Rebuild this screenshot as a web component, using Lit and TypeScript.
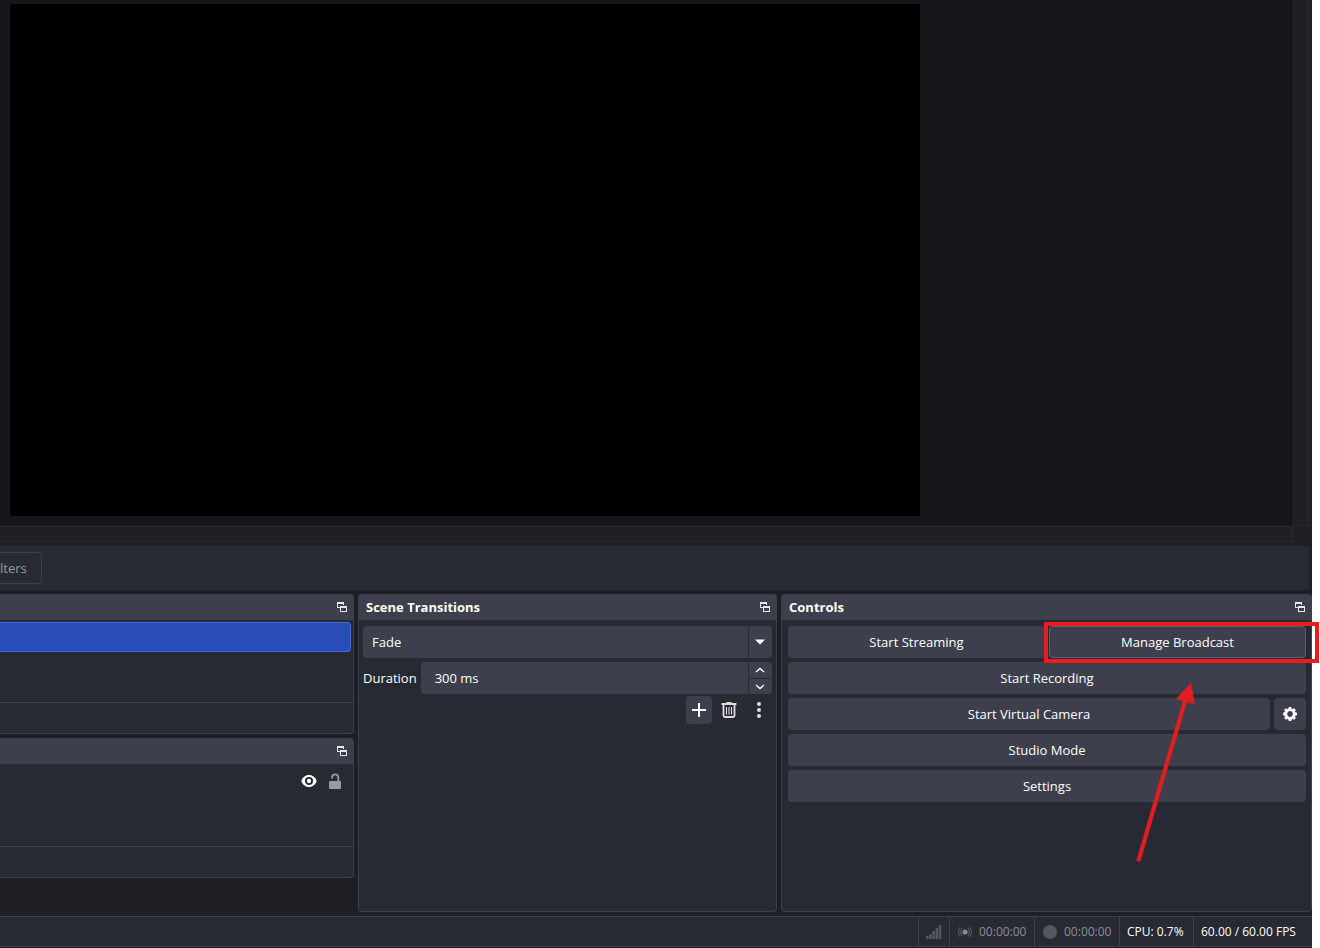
import { LitElement, html, css, svg } from "lit";
import { customElement, property, state } from "lit/decorators.js";

const shared = css`
  *, *::before, *::after { box-sizing: border-box; }
  button, input, select {
    font: inherit;
    color: inherit;
    margin: 0;
    padding: 0;
    border: 0;
    background: none;
  }
  svg { display: block; }
`;

@customElement("dock-panel")
class DockPanel extends LitElement {
  @property() heading = "";
  static styles = [shared, css`
    :host { display: flex; flex-direction: column; min-width: 0; }
    .head {
      display: flex;
      align-items: center;
      justify-content: space-between;
      height: 26px;
      padding: 0 7px 0 8px;
      background: #3d404c;
      border-radius: 4px 4px 0 0;
    }
    .title { margin: 0; font-size: 13px; line-height: 18px; font-weight: 700; color: #fff; }
    .float { color: #e4e6ea; }
    .body {
      flex: 1;
      display: flex;
      flex-direction: column;
      background: #272a33;
      border: 1px solid #3d404c;
      border-top: 0;
      border-radius: 0 0 4px 4px;
    }
    :host([flush]) .head { border-top-left-radius: 0; }
    :host([flush]) .body { border-left: 0; border-bottom-left-radius: 0; }
  `];
  render() {
    return html`
      <div class="head">
        <h2 class="title">${this.heading}</h2>
        <button class="float" aria-label="Float panel">
          <svg width="10" height="10" viewBox="0 0 10 10" fill="currentColor">
            <path d="M0 0H7V3H6V2H1V5H3V6H0Z" />
            <path d="M3 4H10V10H3ZM4 6V9H9V6Z" fill-rule="evenodd" />
          </svg>
        </button>
      </div>
      <div class="body"><slot></slot></div>
    `;
  }
}

const gearTeeth = [0, 45, 90, 135, 180, 225, 270, 315];

@customElement("app-root")
class AppRoot extends LitElement {
  @state() transition = "Fade";

  static styles = [shared, css`
    :host {
      display: block;
      overflow: hidden;
      background: #fff;
      font-family: "Open Sans", "Noto Sans", sans-serif;
      font-size: 13px;
      line-height: 18px;
      color: #fff;
    }
    .window {
      display: flex;
      flex-direction: column;
      min-height: 100vh;
      margin-right: 8px;
      background: #1e1f25;
      border-bottom: 1px solid #1c141c;
    }
    .stage {
      flex: 1;
      display: grid;
      grid-template-columns: 1fr 16px;
      grid-template-rows: 1fr 16px;
      padding-right: 3px;
    }
    .view { display: flex; background: #16171b; padding: 4px 10px 10px; }
    .canvas { width: 71.5%; background: #000; }
    .bar-v { border: 1px solid #292a2f; border-top: 0; background: #1f2024; }
    .bar-h { border: 1px solid #292a2f; border-left: 0; background: #1f2024; }
    .toolbar {
      display: flex;
      align-items: center;
      height: 44px;
      margin: 4px 3px 4px 0;
      background: #272a33;
      border-radius: 0 4px 4px 0;
      overflow: hidden;
    }
    .filters {
      height: 32px;
      margin-left: -25px;
      padding: 0 14px;
      border: 1px solid #3d404c;
      border-radius: 4px;
      color: #97999e;
    }
    .docks {
      display: grid;
      grid-template-columns: 354fr 419fr 531fr;
      gap: 4px;
      height: 318px;
    }
    .stack { display: flex; flex-direction: column; gap: 4px; }
    .stack dock-panel { height: 140px; }
    .list { flex: 1; padding: 2px 2px 0 0; }
    .scene {
      display: block;
      width: 100%;
      height: 30px;
      background: #284cb8;
      border: 1px solid #476bd7;
      border-left: 0;
      border-radius: 0 4px 4px 0;
    }
    .source { display: flex; justify-content: flex-end; align-items: center; gap: 12px; height: 30px; padding-right: 10px; }
    .lock { color: #9b9b9b; }
    .foot { height: 31px; border-top: 1px solid #3d404c; }
    .transitions { display: flex; flex-direction: column; gap: 4px; padding: 6px 4px; }
    .combo { display: grid; grid-template-columns: 1fr 24px; height: 32px; background: #3d404c; border-radius: 4px; overflow: hidden; }
    .combo > * { grid-row: 1; }
    .select {
      grid-column: 1 / 3;
      appearance: none;
      padding: 0 33px 0 9px;
      border-radius: 4px;
    }
    .caret {
      grid-column: 2;
      display: grid;
      place-items: center;
      border-left: 1px solid #272a33;
      pointer-events: none;
    }
    .row { display: flex; align-items: center; gap: 4px; }
    .spin { flex: 1; display: flex; height: 32px; background: #3d404c; border-radius: 4px; overflow: hidden; }
    .value { flex: 1; min-width: 0; padding: 0 14px; }
    .steps { display: grid; grid-template-rows: 1fr 1fr; width: 24px; border-left: 1px solid #272a33; }
    .step { display: grid; place-items: center; }
    .caret, .step { padding-right: 1px; }
    .step + .step { border-top: 1px solid #272a33; }
    .tools { display: flex; justify-content: flex-end; gap: 4px; height: 28px; margin-top: -2px; }
    .tool { display: grid; place-items: center; width: 26px; border-radius: 4px; color: #dcdde2; }
    .raised { background: #3d404c; color: #fff; }
    .controls { display: flex; flex-direction: column; gap: 4px; padding: 6px 5px 6px 6px; }
    .btn { flex: 1; height: 32px; background: #3d404c; border-radius: 4px; }
    .marked { position: relative; flex: 1; display: flex; }
    .outlined { border: 1px solid #5b6273; }
    .gear { flex: none; display: grid; place-items: center; width: 32px; }
    .callout { position: absolute; inset: -4px -13px -5px -5px; border: 4px solid #ea1c1c; pointer-events: none; }
    .arrow { position: absolute; left: 83px; top: 56px; pointer-events: none; }
    .status {
      display: flex;
      justify-content: flex-end;
      height: 31px;
      margin-top: 4px;
      background: #272a33;
      border-top: 1px solid #3d404c;
      border-bottom: 1px solid #3d404c;
      font-size: 12px;
    }
    .cell { display: flex; align-items: center; gap: 6px; padding: 0 7px; border-left: 1px solid #3d404c; }
    .timer { width: 85px; color: #8b8d93; }
    .cpu { width: 74px; }
    .fps { width: 119px; }
  `];

  render() {
    return html`
      <main class="window">
        <section class="stage" aria-label="Preview">
          <div class="view"><div class="canvas"></div></div>
          <div class="bar-v"></div>
          <div class="bar-h"></div>
        </section>
        <div class="toolbar"><button class="filters">Filters</button></div>
        <div class="docks">
          <div class="stack">
            <dock-panel flush>
              <div class="list"><button class="scene" aria-label="Selected scene"></button></div>
              <div class="foot"></div>
            </dock-panel>
            <dock-panel flush>
              <div class="list">
                <div class="source">
                  <button aria-label="Toggle visibility">
                    <svg width="16" height="14" viewBox="0 0 16 14">
                      <path d="M8 1C4.400 1 1.400 3.500 .3 7C1.400 10.500 4.400 13 8 13S14.600 10.500 15.700 7C14.600 3.500 11.600 1 8 1Z" fill="#fff" />
                      <circle cx="8" cy="7" r="3.100" fill="#fff" stroke="#272a33" stroke-width="1.900" />
                    </svg>
                  </button>
                  <button class="lock" aria-label="Toggle lock">
                    <svg width="12" height="16" viewBox="0 0 12 16">
                      <path d="M3 5.500V4A3.200 3.200 0 0 1 9.300 4V8" fill="none" stroke="currentColor" stroke-width="1.800" />
                      <rect y="8" width="12" height="8" rx="1" fill="currentColor" />
                    </svg>
                  </button>
                </div>
              </div>
              <div class="foot"></div>
            </dock-panel>
          </div>

          <dock-panel heading="Scene Transitions">
            <div class="transitions">
              <div class="combo">
                <select class="select" aria-label="Transition"><option>${this.transition}</option></select>
                <span class="caret"><svg width="10" height="6" viewBox="0 0 10 6"><path d="M0 .5H10L5 5.500Z" fill="#fff" /></svg></span>
              </div>
              <div class="row">
                <label for="duration">Duration</label>
                <div class="spin">
                  <input class="value" id="duration" type="text" value="300 ms" />
                  <div class="steps">
                    <button class="step" aria-label="Increase">${this.chevron("M1 5L5 1.500L9 5")}</button>
                    <button class="step" aria-label="Decrease">${this.chevron("M1 1L5 4.500L9 1")}</button>
                  </div>
                </div>
              </div>
              <div class="tools">
                <button class="tool raised" aria-label="Add">
                  <svg width="14" height="14" viewBox="0 0 14 14"><path d="M7 0V14M0 7H14" stroke="currentColor" stroke-width="2" /></svg>
                </button>
                <button class="tool" aria-label="Remove">
                  <svg width="16" height="16" viewBox="0 0 16 16" fill="none" stroke="currentColor">
                    <path d="M.5 2H15.500M5.500 1H10.500" stroke-width="2" />
                    <path d="M2.500 3V13.500Q2.500 15 4 15H12Q13.500 15 13.500 13.500V3" stroke-width="1.800" />
                    <path d="M5.500 5V12.500M8 5V12.500M10.500 5V12.500" stroke-width="1.100" />
                  </svg>
                </button>
                <button class="tool" aria-label="More options">
                  <svg width="4" height="16" viewBox="0 0 4 16" fill="currentColor">
                    <circle cx="2" cy="2" r="2" /><circle cx="2" cy="8" r="2" /><circle cx="2" cy="14" r="2" />
                  </svg>
                </button>
              </div>
            </div>
          </dock-panel>

          <dock-panel heading="Controls">
            <div class="controls">
              <div class="row">
                <button class="btn">Start Streaming</button>
                <div class="marked">
                  <button class="btn outlined">Manage Broadcast</button>
                  <div class="callout"></div>
                  <svg class="arrow" width="68" height="182" viewBox="0 0 68 182" fill="#e01f20">
                    <path d="M59 1L62.500 22L54.800 19.800L8.200 179.500L4.600 178.500L51.200 18.700L44.500 16.500Z" stroke="#e01f20" stroke-width=".5" />
                  </svg>
                </div>
              </div>
              <div class="row"><button class="btn">Start Recording</button></div>
              <div class="row">
                <button class="btn">Start Virtual Camera</button>
                <button class="btn gear" aria-label="Virtual camera settings">
                  <svg width="14" height="14" viewBox="-7 -7 14 14">
                    ${gearTeeth.map((a) => svg`<path d="M-1.900 -4.500L-1.200 -7H1.200L1.900 -4.500Z" fill="#fff" transform="rotate(${a})" />`)}
                    <circle r="4.200" fill="none" stroke="#fff" stroke-width="2.600" />
                  </svg>
                </button>
              </div>
              <div class="row"><button class="btn">Studio Mode</button></div>
              <div class="row"><button class="btn">Settings</button></div>
            </div>
          </dock-panel>
        </div>

        <footer class="status">
          <div class="cell">
            <svg width="16" height="14" viewBox="0 0 16 14" fill="#55575e">
              <path d="M0 11H2.500V14H0ZM3.200 9H5.700V14H3.200ZM6.400 6H8.900V14H6.400ZM9.600 3H12.100V14H9.600ZM12.800 0H15.300V14H12.800Z" />
            </svg>
          </div>
          <div class="cell timer">
            <svg width="16" height="14" viewBox="0 0 16 14" fill="none" stroke="#50525a" stroke-width="1.300">
              <circle cx="8" cy="7" r="2.600" fill="#85878c" stroke="none" />
              <path d="M5 3.200Q2.600 7 5 10.800M11 3.200Q13.400 7 11 10.800M3.200 2Q-.2 7 3.200 12M12.800 2Q16.200 7 12.800 12" />
            </svg>
            <span>00:00:00</span>
          </div>
          <div class="cell timer">
            <svg width="16" height="14" viewBox="0 0 16 14"><circle cx="8" cy="7" r="7" fill="#55575e" /></svg>
            <span>00:00:00</span>
          </div>
          <div class="cell cpu">CPU: 0.7%</div>
          <div class="cell fps">60.00 / 60.00 FPS</div>
        </footer>
      </main>
    `;
  }

  private chevron(d: string) {
    return html`<svg width="10" height="6" viewBox="0 0 10 6"><path d=${d} fill="none" stroke="#fff" stroke-width="1.500" /></svg>`;
  }
}
